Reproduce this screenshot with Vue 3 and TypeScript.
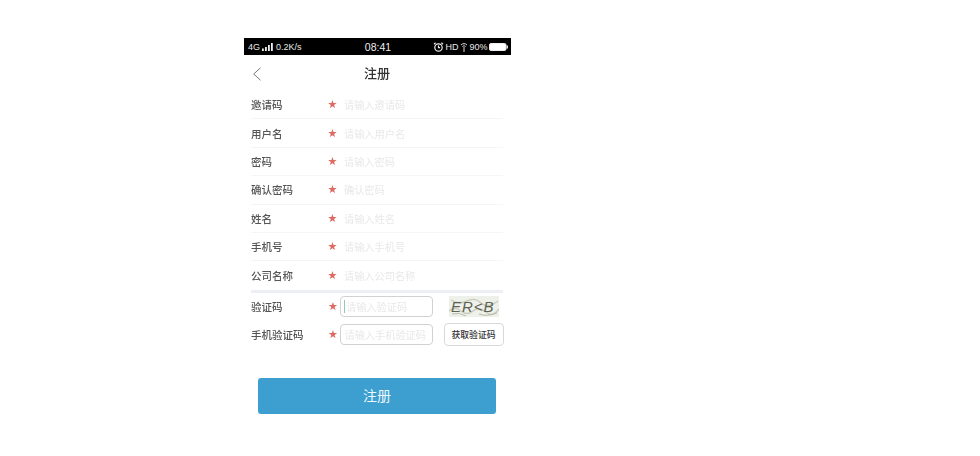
<script setup lang="ts">
interface Row { label: string; placeholder: string }
const rows: Row[] = [
  { label: '邀请码', placeholder: '请输入邀请码' },
  { label: '用户名', placeholder: '请输入用户名' },
  { label: '密码', placeholder: '请输入密码' },
  { label: '确认密码', placeholder: '确认密码' },
  { label: '姓名', placeholder: '请输入姓名' },
  { label: '手机号', placeholder: '请输入手机号' },
  { label: '公司名称', placeholder: '请输入公司名称' },
]
</script>

<template>
  <div class="page">
    <div class="phone">
      <div class="status">
        <div class="st-left">
          <span>4G</span>
          <svg width="11" height="8" viewBox="0 0 11 8"><path d="M0 5.5h1.8V8H0zM3 4h1.8v4H3zM6 2h1.8v6H6zM9 0h1.8v8H9z" fill="#eee"/></svg>
          <span>0.2K/s</span>
        </div>
        <div class="st-time">08:41</div>
        <div class="st-right">
          <svg width="11" height="10" viewBox="0 0 11 10" fill="none" stroke="#eee" stroke-width="1.2"><circle cx="5.5" cy="5.5" r="3.7"/><path d="M5.5 3.5v2.2h1.6M1 2.2 2.6.8M10 2.2 8.4.8"/></svg>
          <span>HD</span>
          <svg width="8" height="10" viewBox="0 0 8 10" fill="none" stroke="#ddd" stroke-width="1"><path d="M1 3a4 4 0 0 1 6 0M2.4 4.6a2 2 0 0 1 3.2 0M4 5v5"/></svg>
          <span>90%</span>
          <svg width="20" height="8" viewBox="0 0 20 8"><rect x=".5" y=".5" width="16.5" height="7" rx="1.5" fill="#fff" stroke="#eee"/><rect x="17.5" y="2.5" width="1.5" height="3" fill="#ddd"/></svg>
        </div>
      </div>

      <div class="nav">
        <svg class="back" width="10" height="14" viewBox="0 0 10 14" fill="none" stroke="#777" stroke-width="1"><path d="M8.5.8 1.7 7l6.8 6.2"/></svg>
        <span class="title">注册</span>
      </div>

      <div class="form">
        <div v-for="r in rows" :key="r.label" class="row">
          <span class="label">{{ r.label }}</span>
          <span class="star">★</span>
          <span class="ph">{{ r.placeholder }}</span>
        </div>
      </div>

      <div class="thick"></div>

      <div class="verify">
        <div class="vrow">
          <span class="label">验证码</span>
          <span class="star">★</span>
          <div class="box"><i class="caret"></i><span class="ph tight">请输入验证码</span></div>
          <svg class="captcha" width="50" height="21" viewBox="0 0 50 21">
            <rect width="50" height="21" fill="#eef0ea"/>
            <path d="M0 15q6-5 12 0t12 0 13 1 13-3M2 4q8 5 16 1t14 2 17-2" fill="none" stroke="#c9ccbd" stroke-width="1.4"/>
            <path d="M3 18q8-2 14 2M30 18q8 3 18-1" fill="none" stroke="#b9bca8" stroke-width="1"/>
            <text x="2" y="16" class="cap-text">ER&lt;B</text>
          </svg>
        </div>
        <div class="vrow">
          <span class="label">手机验证码</span>
          <span class="star">★</span>
          <div class="box"><span class="ph long">请输入手机验证码</span></div>
          <button class="code" type="button">获取验证码</button>
        </div>
      </div>

      <button class="submit" type="button">注册</button>
    </div>
  </div>
</template>

<style>
html, body { margin: 0; background: #fff; }
</style>

<style scoped>
.page {
  width: 980px;
  height: 456px;
  padding: 38px 0 0 244px;
  box-sizing: border-box;
  overflow: hidden;
  font-family: "Noto Sans CJK SC", "Liberation Sans", sans-serif;
  background: #fff;
}
.phone {
  width: 267px;
  display: flex;
  flex-direction: column;
  filter: blur(0.4px);
}
.status {
  height: 17px;
  background: #000;
  color: #e8e8e8;
  font-family: "Liberation Sans", sans-serif;
  font-size: 9px;
  display: grid;
  grid-template-columns: 1fr auto 1fr;
  align-items: center;
  padding: 0 2px 0 4px;
  box-sizing: border-box;
}
.st-left { display: flex; align-items: center; gap: 2px; }
.st-left span:last-child { margin-left: 1px; }
.st-time { font-size: 10.5px; color: #eee; margin-right: 1px; }
.st-right { display: flex; align-items: center; justify-content: flex-end; gap: 1.5px; }
.nav {
  height: 36px;
  display: flex;
  align-items: center;
  justify-content: center;
  position: relative;
}
.back { position: absolute; left: 8px; top: 12px; }
.title { font-size: 13px; color: #333; font-weight: 500; margin-top: -2px; margin-right: 1px; }
.form {
  margin: 0 8px 0 7px;
  display: flex;
  flex-direction: column;
}
.row {
  height: 28.4px;
  box-sizing: border-box;
  display: flex;
  align-items: center;
  border-bottom: 1px solid #f5f5f5;
}
.row:last-child { border-bottom: none; }
.label {
  width: 77px;
  font-size: 10.5px;
  font-weight: 500;
  color: #555;
  white-space: nowrap;
}
.star {
  width: 17px;
  color: #df6a62;
  font-size: 11px;
  font-family: "DejaVu Sans", sans-serif;
  line-height: 1;
  text-indent: 0.5px;
  margin-left: -1px;
}
.ph {
  font-size: 10.2px;
  color: #e8e8e8;
  white-space: nowrap;
}
.thick {
  height: 3px;
  margin: 0 8px 0 7px;
  background: #eeeef5;
}
.verify {
  margin: 3px 7px 0 7px;
  display: flex;
  flex-direction: column;
  gap: 7px;
}
.vrow {
  height: 21.5px;
  display: flex;
  align-items: center;
}
.vrow .star { width: 12px; }
.vrow .label { width: 77.5px; }
.box {
  width: 93px;
  height: 21px;
  box-sizing: border-box;
  border: 1px solid #d2d2d2;
  border-radius: 4px;
  display: flex;
  align-items: center;
  padding-left: 4px;
  gap: 1px;
  overflow: hidden;
}
.caret {
  width: 1.5px;
  height: 13px;
  background: #8fc8bd;
  margin-left: -1px;
}
.captcha { margin-left: 16px; flex: none; }
.cap-text {
  font-family: "Liberation Sans", sans-serif;
  font-style: italic;
  font-size: 15px;
  letter-spacing: 1px;
  fill: #5d6352;
}
.code {
  width: 60px;
  height: 23px;
  margin-left: 11px;
  padding: 0;
  background: #fff;
  border: 1px solid #d8d8d8;
  border-radius: 4px;
  font-family: inherit;
  font-size: 8.8px;
  font-weight: 500;
  color: #333;
  flex: none;
}
.submit {
  width: 238px;
  height: 36px;
  margin: 32px 0 0 14px;
  border: none;
  border-radius: 3px;
  background: #3d9fd0;
  color: #eef7fb;
  font-family: inherit;
  font-size: 14px;
  padding: 0 0 1px;
}
</style>
